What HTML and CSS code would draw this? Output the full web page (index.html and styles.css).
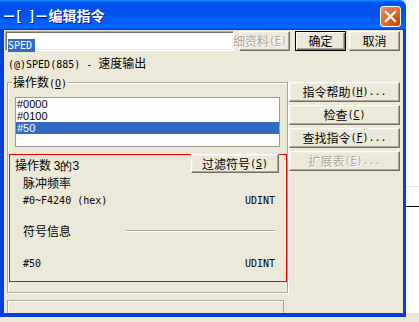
FILE: index.html
```html
<!DOCTYPE html>
<html>
<head>
    <meta charset="utf-8">
    <title>编辑指令</title>
    <link rel="stylesheet" href="styles.css">
</head>
<body>
    <div class="screen">
        <div class="window">
            <div class="titlebar">
                <span class="title">－[<span class="gap"></span>]－编辑指令</span>
                <span class="close">
                    <svg width="13" height="13" viewBox="0 0 13 13">
                        <path d="M2 2 L11 11 M11 2 L2 11" stroke="#fff" stroke-width="2.4" stroke-linecap="square"/>
                    </svg>
                </span>
            </div>

            <div class="client">
                <div class="top-row">
                    <div class="cmd-input"><span class="sel mono">SPED</span></div>
                    <div class="btn disabled clip">细资料<span class="mono"> (<u>E</u>)</span></div>
                    <div class="btn default">确定</div>
                    <div class="btn">取消</div>
                </div>

                <div class="desc"><span class="mono">(@)SPED(885) - </span>速度输出</div>

                <div class="main">
                    <div class="group">
                        <div class="legend">操作数<span class="mono">(<u>O</u>)</span></div>
                        <div class="listbox">
                            <div class="item">#0000</div>
                            <div class="item">#0100</div>
                            <div class="item selected">#50</div>
                        </div>

                        <div class="operand">
                            <div class="op-head">
                                <span class="op-label">操作数 <span class="sans">3的3</span></span>
                                <div class="btn filter">过滤符号<span class="mono">(<u>S</u>)</span></div>
                            </div>
                            <div class="op-line name">脉冲频率</div>
                            <div class="op-line range"><span class="mono">#0~F4240 (hex)</span><span class="mono">UDINT</span></div>
                            <div class="op-line symbol"><span>符号信息</span><span class="rule"></span></div>
                            <div class="op-line value"><span class="mono">#50</span><span class="mono">UDINT</span></div>
                        </div>
                    </div>

                    <div class="side">
                        <div class="btn">指令帮助<span class="mono">(<u>H</u>)...</span></div>
                        <div class="btn">检查<span class="mono">(<u>C</u>)</span></div>
                        <div class="btn">查找指令<span class="mono">(<u>F</u>)...</span></div>
                        <div class="btn disabled">扩展表<span class="mono">(<u>E</u>)...</span></div>
                    </div>
                </div>

                <div class="status"></div>
            </div>
        </div>

        <div class="outside">
            <div class="line light"></div>
            <div class="line dark"></div>
        </div>
    </div>
</body>
</html>
```

FILE: styles.css
```css
:root {
    --face: #ECE9D8;
    --shadow: #ACA899;
    --dark: #716F64;
    --light: #F1EFE2;
}

body {
    margin: 0;
    width: 419px;
    height: 322px;
    overflow: hidden;
    background: var(--face);
    font-family: "Noto Sans CJK SC", sans-serif;
    font-size: 12px;
    color: #000;
}

.screen {
    display: flex;
    align-items: flex-start;
}

/* 窗口外框 */
.window {
    width: 406px;
    height: 317px;
    box-sizing: border-box;
    padding: 0 3px 4px 4px;
    background: #0A3ED8;
    border-radius: 0 7px 0 0;
    display: flex;
    flex-direction: column;
}

.titlebar {
    height: 30px;
    margin: 0 -3px 0 -4px;
    padding: 0 5px 0 2px;
    border-radius: 0 7px 0 0;
    background: linear-gradient(180deg, #0997FF 0%, #0053EE 8%, #0050EE 40%, #0066FF 88%, #0066FF 93%, #005BFF 95%, #003DD7 96%, #003DD7 100%);
    display: flex;
    align-items: center;
    justify-content: space-between;
}

.title {
    color: #fff;
    font-weight: bold;
    font-size: 14px;
    line-height: 16px;
    text-shadow: 1px 1px #0F1089;
}

.title .gap {
    display: inline-block;
    width: 8px;
}

.close {
    width: 21px;
    height: 21px;
    box-sizing: border-box;
    margin-top: 3px;
    border: 1px solid #fff;
    border-radius: 3px;
    background: radial-gradient(circle at 85% 85%, #CC4600 0%, #DC6527 45%, #E97D55 80%, #F0A080 100%);
    display: flex;
    align-items: center;
    justify-content: center;
}

.client {
    height: 283px;
    background: var(--face);
    overflow: hidden;
    padding: 1px 3px 0 1px;
    box-sizing: border-box;
}

.mono {
    font-family: "DejaVu Sans Mono", monospace;
    font-size: 10px;
}

.sans {
    font-family: "Liberation Sans", sans-serif;
    font-size: 12px;
}

/* 按钮 */
.btn {
    height: 20px;
    box-sizing: border-box;
    background: var(--face);
    border: 1px solid;
    border-color: #fff var(--dark) var(--dark) #fff;
    box-shadow: inset -1px -1px 0 var(--shadow), inset 1px 1px 0 var(--light);
    display: flex;
    align-items: center;
    justify-content: center;
    white-space: nowrap;
    line-height: 14px;
}

.btn.default {
    border-color: #000;
    box-shadow: inset 1px 1px 0 #fff, inset -1px -1px 0 var(--dark), inset -2px -2px 0 var(--shadow);
}

.btn.disabled {
    color: var(--shadow);
    text-shadow: 1px 1px 0 #fff;
}

.btn.clip {
    justify-content: flex-end;
    padding-right: 2px;
}

.top-row {
    display: flex;
    height: 20px;
}

.cmd-input {
    width: 229px;
    margin-right: 5px;
    box-sizing: border-box;
    background: #fff;
    border: 1px solid;
    border-color: var(--shadow) #fff #fff var(--shadow);
    box-shadow: inset 1px 1px 0 var(--dark), inset -1px -1px 0 var(--light);
    padding: 3px 0 0 2px;
}

.sel {
    display: inline-block;
    background: #316AC5;
    color: #fff;
    line-height: 13px;
    padding: 0 3px 0 0;
}

.top-row .btn {
    width: 51px;
}

.top-row .clip {
    margin-right: 5px;
}

.top-row .default {
    margin-right: 3px;
}

.desc {
    margin: 6px 0 0 3px;
    line-height: 12px;
    white-space: nowrap;
}

.main {
    display: flex;
    align-items: flex-start;
    margin-top: 11px;
}

/* 操作数 分组框 */
.group {
    width: 281px;
    margin-left: 2px;
    box-sizing: border-box;
    border: 1px solid var(--shadow);
    box-shadow: inset 1px 1px 0 #fff, 1px 1px 0 #fff;
    padding-bottom: 10px;
}

.legend {
    width: fit-content;
    margin: -7px 0 0 4px;
    padding: 0 1px;
    background: var(--face);
    line-height: 12px;
}

.listbox {
    width: 265px;
    height: 50px;
    box-sizing: border-box;
    margin: 7px 0 0 7px;
    background: #fff;
    border: 1px solid #9D9B8E;
    font-family: "Liberation Sans", sans-serif;
    font-size: 11px;
}

.item {
    line-height: 12px;
    padding-left: 1px;
}

.item.selected {
    background: #316AC5;
    color: #fff;
}

.operand {
    height: 128px;
    box-sizing: border-box;
    margin: 7px 0 0 1px;
    border: 1px solid #F00000;
}

.op-head {
    display: flex;
    justify-content: space-between;
    margin-top: -1px;
    padding: 0 7px 0 5px;
}

.op-label {
    padding-top: 5px;
    line-height: 12px;
}

.filter {
    width: 88px;
    height: 19px;
}

.op-line {
    display: flex;
    justify-content: space-between;
    align-items: center;
    line-height: 12px;
    padding: 0 11px 0 13px;
}

.name { margin-top: 4px; }
.range { margin-top: 6px; }
.symbol { margin-top: 18px; }
.value { margin-top: 21px; }

.rule {
    width: 149px;
    border-top: 1px solid var(--shadow);
    border-bottom: 1px solid #fff;
}

.side {
    width: 111px;
    margin-left: 1px;
    display: flex;
    flex-direction: column;
    gap: 3px;
}

.status {
    width: 277px;
    height: 24px;
    box-sizing: border-box;
    margin: 7px 0 0 2px;
    border: 1px solid var(--shadow);
    box-shadow: inset 1px 1px 0 #fff;
}

/* 窗口外 */
.outside {
    flex: 1;
    height: 313px;
    background: #fff;
    padding-top: 186px;
    box-sizing: border-box;
}

.line {
    height: 1px;
}

.line.light {
    background: #E6E6E6;
}

.line.dark {
    margin-top: 19px;
    background: #000;
}
```
